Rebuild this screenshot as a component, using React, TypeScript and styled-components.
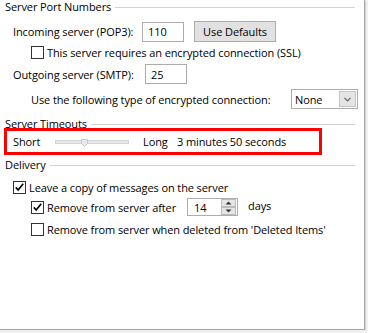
import styled, { createGlobalStyle } from "styled-components";

const GlobalStyle = createGlobalStyle`
  html, body {
    margin: 0;
    padding: 0;
    background: #f0f0f0;
  }
  body {
    font-family: "Open Sans", "Noto Sans", sans-serif;
    font-size: 11px;
    letter-spacing: -0.1px;
    color: #000;
  }
`;

const Panel = styled.div`
  width: 365px;
  height: 330px;
  box-sizing: border-box;
  background: #ffffff;
  border-right: 1px solid #a3a3a3;
  border-bottom: 1px solid #a3a3a3;
  box-shadow: 1px 1px 0 #d4d4d4;
  padding-left: 5px;
  display: flex;
  flex-direction: column;
`;

const GroupTitle = styled.div<{ $top: number }>`
  display: flex;
  align-items: center;
  height: 14px;
  line-height: 14px;
  margin-top: ${(p) => p.$top}px;
  margin-right: 9px;
  white-space: nowrap;

  &::after {
    content: "";
    flex: 1;
    height: 1px;
    margin-left: 4px;
    background: #d2d2d2;
  }
`;

const Row = styled.div<{ $top: number; $indent: number; $h: number }>`
  display: flex;
  align-items: center;
  height: ${(p) => p.$h}px;
  margin-top: ${(p) => p.$top}px;
  padding-left: ${(p) => p.$indent}px;
  white-space: nowrap;
`;

const Label = styled.span<{ $w?: number }>`
  display: inline-block;
  width: ${(p) => (p.$w ? `${p.$w}px` : "auto")};
  flex: none;
`;

const TextBox = styled.div<{ $w: number; $h: number }>`
  box-sizing: border-box;
  width: ${(p) => p.$w}px;
  height: ${(p) => p.$h}px;
  border: 1px solid #acacac;
  padding-left: 5px;
  display: flex;
  align-items: center;
  flex: none;
`;

const Button = styled.div`
  box-sizing: border-box;
  width: 82px;
  height: 21px;
  margin-left: 10px;
  background: #e1e1e1;
  border: 1px solid #adadad;
  display: flex;
  align-items: center;
  justify-content: center;
`;

const Box = styled.span`
  box-sizing: border-box;
  width: 13px;
  height: 13px;
  border: 1px solid #333333;
  background: #fff;
  margin-right: 3px;
  flex: none;
  display: flex;
  align-items: center;
  justify-content: center;
`;

const Select = styled.div`
  box-sizing: border-box;
  width: 67px;
  height: 20px;
  border: 1px solid #acacac;
  display: flex;
  align-items: center;
  justify-content: space-between;
  padding-left: 3px;
  padding-right: 1px;
`;

const SelectButton = styled.span`
  box-sizing: border-box;
  width: 17px;
  height: 16px;
  background: #e5e5e5;
  border: 1px solid #c4c4c4;
  display: flex;
  align-items: center;
  justify-content: center;
`;

const Highlight = styled.div`
  box-sizing: border-box;
  width: 318px;
  height: 27px;
  margin-top: -3px;
  margin-left: -1px;
  border: 3px solid #ff0000;
  padding-left: 6px;
  display: flex;
  align-items: center;
  white-space: nowrap;
`;

const Track = styled.div`
  position: relative;
  box-sizing: border-box;
  width: 74px;
  height: 4px;
  background: #e7e7e7;
  border: 1px solid #d6d6d6;
  flex: none;
`;

const Thumb = styled.svg`
  position: absolute;
  left: 25px;
  top: -2px;
`;

const Spin = styled.div`
  box-sizing: border-box;
  width: 51px;
  height: 18px;
  border: 1px solid #acacac;
  display: flex;
  align-items: center;
  justify-content: space-between;
  padding-left: 6px;
  padding-right: 1px;
  flex: none;
`;

const SpinButtons = styled.div`
  display: flex;
  flex-direction: column;
`;

const SpinButton = styled.span`
  box-sizing: border-box;
  width: 15px;
  height: 8px;
  background: #e5e5e5;
  border: 1px solid #bcbcbc;
  display: flex;
  align-items: center;
  justify-content: center;
`;

function Check({ checked }: { checked?: boolean }) {
  return (
    <Box>
      {checked && (
        <svg width="11" height="11" viewBox="0 0 11 11">
          <path d="M1.8 5.4 L4.2 8 L9.2 1.8" fill="none" stroke="#000" strokeWidth="1.7" />
        </svg>
      )}
    </Box>
  );
}

export default function App() {
  return (
    <>
      <GlobalStyle />
      <Panel>
        <GroupTitle $top={0}>Server Port Numbers</GroupTitle>
        <Row $top={7} $indent={8} $h={21}>
          <Label $w={129}>Incoming server (POP3):</Label>
          <TextBox $w={42} $h={20}>110</TextBox>
          <Button>Use Defaults</Button>
        </Row>
        <Row $top={4} $indent={26} $h={13}>
          <Check />
          This server requires an encrypted connection (SSL)
        </Row>
        <Row $top={5} $indent={8} $h={20}>
          <Label $w={132}>Outgoing server (SMTP):</Label>
          <TextBox $w={42} $h={20}>25</TextBox>
        </Row>
        <Row $top={5} $indent={26} $h={20}>
          <Label $w={260}>Use the following type of encrypted connection:</Label>
          <Select>
            None
            <SelectButton>
              <svg width="7" height="5" viewBox="0 0 7 5">
                <path d="M0.5 0.8 L3.5 3.8 L6.5 0.8" fill="none" stroke="#606060" strokeWidth="1.2" />
              </svg>
            </SelectButton>
          </Select>
        </Row>
        <GroupTitle $top={8}>Server Timeouts</GroupTitle>
        <Highlight>
          <Label $w={42}>Short</Label>
          <Track>
            <Thumb width="7" height="8" viewBox="0 0 7 8">
              <path d="M0.5 0.5 H6.5 V4.5 L3.5 7.5 L0.5 4.5 Z" fill="#e9e9e9" stroke="#c9c9c9" />
            </Thumb>
          </Track>
          <Label $w={34} style={{ marginLeft: 14 }}>Long</Label>
          3 minutes 50 seconds
        </Highlight>
        <GroupTitle $top={3}>Delivery</GroupTitle>
        <Row $top={9} $indent={8} $h={13}>
          <Check checked />
          Leave a copy of messages on the server
        </Row>
        <Row $top={4} $indent={26} $h={18}>
          <Check checked />
          <Label $w={140}>Remove from server after</Label>
          <Spin>
            14
            <SpinButtons>
              <SpinButton>
                <svg width="7" height="4" viewBox="0 0 7 4">
                  <path d="M0.5 3.5 L3.5 0.5 L6.5 3.5 Z" fill="#333" />
                </svg>
              </SpinButton>
              <SpinButton>
                <svg width="7" height="4" viewBox="0 0 7 4">
                  <path d="M0.5 0.5 L3.5 3.5 L6.5 0.5 Z" fill="#333" />
                </svg>
              </SpinButton>
            </SpinButtons>
          </Spin>
          <Label style={{ marginLeft: 10, marginTop: -3 }}>days</Label>
        </Row>
        <Row $top={7} $indent={26} $h={13}>
          <Check />
          Remove from server when deleted from 'Deleted Items'
        </Row>
      </Panel>
    </>
  );
}
